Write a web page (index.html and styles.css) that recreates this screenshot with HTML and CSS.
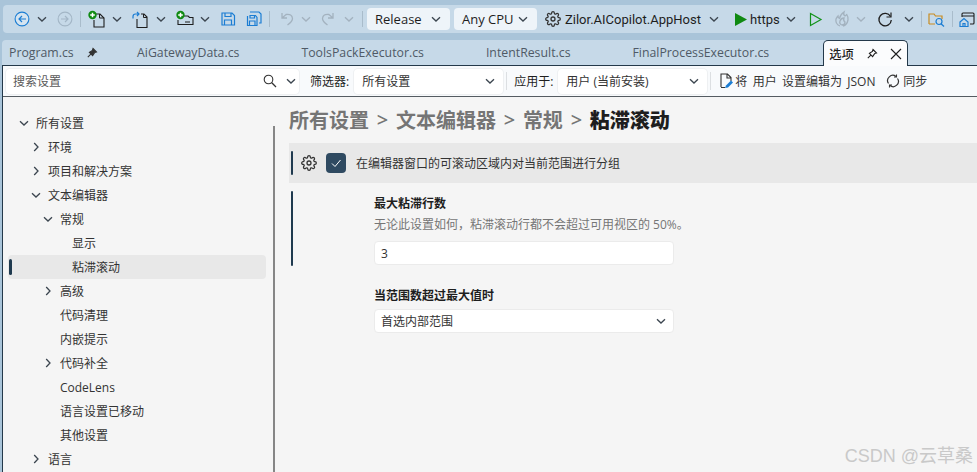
FILE: index.html
```html
<!DOCTYPE html>
<html lang="zh-CN">
<head>
<meta charset="utf-8">
<title>选项</title>
<link rel="stylesheet" href="styles.css">
</head>
<body>
<svg class="defs" aria-hidden="true">
  <defs>
    <symbol id="chev" viewBox="0 0 12 12"><path d="M2 4.2 6 8l4-3.8" fill="none" stroke="currentColor" stroke-width="1.3"/></symbol>
    <symbol id="gear" viewBox="0 0 24 24"><g fill="none" stroke="currentColor" stroke-width="1.9"><circle cx="12" cy="12" r="3"/><path d="M19.4 15a1.65 1.65 0 0 0 .33 1.82l.06.06a2 2 0 0 1 0 2.83 2 2 0 0 1-2.83 0l-.06-.06a1.65 1.65 0 0 0-1.82-.33 1.65 1.65 0 0 0-1 1.51V21a2 2 0 0 1-2 2 2 2 0 0 1-2-2v-.09A1.65 1.65 0 0 0 9 19.4a1.65 1.65 0 0 0-1.82.33l-.06.06a2 2 0 0 1-2.83 0 2 2 0 0 1 0-2.83l.06-.06a1.65 1.65 0 0 0 .33-1.82 1.65 1.65 0 0 0-1.51-1H3a2 2 0 0 1-2-2 2 2 0 0 1 2-2h.09A1.65 1.65 0 0 0 4.6 9a1.65 1.65 0 0 0-.33-1.82l-.06-.06a2 2 0 0 1 0-2.83 2 2 0 0 1 2.83 0l.06.06a1.65 1.65 0 0 0 1.82.33H9a1.65 1.65 0 0 0 1-1.51V3a2 2 0 0 1 2-2 2 2 0 0 1 2 2v.09a1.65 1.65 0 0 0 1 1.51 1.65 1.65 0 0 0 1.82-.33l.06-.06a2 2 0 0 1 2.83 0 2 2 0 0 1 0 2.83l-.06.06a1.65 1.65 0 0 0-.33 1.82V9a1.65 1.65 0 0 0 1.51 1H21a2 2 0 0 1 2 2 2 2 0 0 1-2 2h-.09a1.65 1.65 0 0 0-1.51 1z"/></g></symbol>
    <symbol id="pin" viewBox="0 0 12 12"><path d="M7 1.5 10.5 5 8.6 5.6 6.6 8.6 3.4 5.4 6.4 3.4ZM4.8 7.2 1.8 10.2" stroke="currentColor" stroke-width="1.1"/></symbol>
  </defs>
</svg>

<div class="app">
  <div class="toolbar">
    <svg class="ic16" viewBox="0 0 16 16"><circle cx="8" cy="8" r="6.9" fill="#d5e4f0" stroke="#1b7dd3" stroke-width="1.1"/><path d="M12 8H5M8 5 5 8l3 3" fill="none" stroke="#1b7dd3" stroke-width="1.2"/></svg>
    <svg class="chev m6"><use href="#chev"/></svg>
    <svg class="ic16 m9" viewBox="0 0 16 16"><circle cx="8" cy="8" r="6.9" fill="none" stroke="#a3b6c6" stroke-width="1.1"/><path d="M4 8h7M8 5l3 3-3 3" fill="none" stroke="#a3b6c6" stroke-width="1.2"/></svg>
    <span class="sep m7"></span>
    <svg class="ic18 m7" viewBox="0 0 18 18"><path d="M6.500 4H12l4 4v9H6V10" fill="none" stroke="#1e1e1e" stroke-width="1.1"/><path d="M11.500 4v4H16" fill="none" stroke="#1e1e1e" stroke-width="1"/><circle cx="4.500" cy="5" r="4.200" fill="#0f8a12"/><path d="M2.200 5h4.600M4.500 2.700v4.600" stroke="#fff" stroke-width="1.500"/></svg>
    <svg class="chev m5"><use href="#chev"/></svg>
    <svg class="ic16 m9" viewBox="0 0 16 16"><path d="M5 8v9M5 16.500h10V6l-3-3H9" fill="none" stroke="#1e1e1e" stroke-width="1.1"/><path d="M11.500 3v3.500H15" fill="none" stroke="#1e1e1e"/><path d="M1 7.500V5.500Q1 3 3.500 3H7M5 1l2 2-2 2" fill="none" stroke="#1b7dd3" stroke-width="1.2"/></svg>
    <svg class="chev m7"><use href="#chev"/></svg>
    <svg class="ic18 m9" viewBox="0 0 18 18"><path d="M6 6h6l1.500 1.500H17v7H2V10" fill="none" stroke="#1e1e1e" stroke-width="1.1"/><path d="M9 12h5" stroke="#1e1e1e"/><circle cx="4.500" cy="5" r="4.200" fill="#0f8a12"/><path d="M2.200 5h4.600M4.500 2.700v4.600" stroke="#fff" stroke-width="1.500"/></svg>
    <svg class="chev m5"><use href="#chev"/></svg>
    <svg class="ic16 m9" viewBox="0 0 16 16"><path d="M2 2h10l2.500 2.500V14H2ZM5 2v3.500h6V2M4.500 14V9h7v5" fill="none" stroke="#1b7dd3" stroke-width="1.2"/></svg>
    <svg class="ic16 m10" viewBox="0 0 16 16"><path d="M4 1h9l2 2v9h-2M1.500 5V14.500H11V6.500L9.500 4.500H4V4M4 4.500V7H8.500V4.500M3.500 14.500V10H9v4.500" fill="none" stroke="#1b7dd3" stroke-width="1.200"/></svg>
    <span class="sep m7"></span>
    <svg class="ic16 m8" viewBox="0 0 16 16"><path d="M4 2v5h5M4 7l4-3.500q6-1 6.500 4 0 3-5 6.500" fill="none" stroke="#a3b2bf" stroke-width="1.300"/></svg>
    <svg class="chev m6 dim"><use href="#chev"/></svg>
    <svg class="ic16 m9" viewBox="0 0 16 16"><path d="M12 2v5H7M12 7 8 3.500q-6-1-6.500 4 0 3 5 6.500" fill="none" stroke="#a3b2bf" stroke-width="1.300"/></svg>
    <svg class="chev m6 dim"><use href="#chev"/></svg>
    <span class="sep m7"></span>
    <div class="combo m4 combo-w"><span>Release</span><svg class="chev"><use href="#chev"/></svg></div>
    <div class="combo m4 combo-w"><span>Any CPU</span><svg class="chev"><use href="#chev"/></svg></div>
    <svg class="ic16 m8 dark"><use href="#gear"/></svg>
    <span class="tb-text m4 project">Zilor.AICopilot.AppHost</span>
    <svg class="chev m6"><use href="#chev"/></svg>
    <svg class="ic16 m12" viewBox="0 0 16 16"><path d="M3 2 15 8.500 3 15Z" fill="#0f8a12"/></svg>
    <span class="tb-text m2 profile">https</span>
    <svg class="chev m6"><use href="#chev"/></svg>
    <svg class="ic16 m10" viewBox="0 0 16 16"><path d="M3.500 2.500 14 8.500 3.500 14.500Z" fill="none" stroke="#12921a" stroke-width="1.200"/></svg>
    <svg class="ic16 m11" viewBox="0 0 16 16"><path d="M6 15Q1 13 2 8q1-2 2-3 0 2 1.500 2.500Q6 4 10 1q-1 3 1 4 2-1 1.500-2 2 3 1.500 6-1 5-5 6M6 10q1-3 4-3-1 3 1 4 0 3-3 3-3-1-2-4Z" fill="none" stroke="#a3b2bf" stroke-width="1.300"/></svg>
    <svg class="chev m5 dim"><use href="#chev"/></svg>
    <svg class="ic16 m10" viewBox="0 0 16 16"><path d="M13.500 5.500A6.200 6.200 0 1 0 14.300 9" fill="none" stroke="#1e1e1e" stroke-width="1.300"/><path d="M14 1.500v4.500H9.500" fill="none" stroke="#1e1e1e" stroke-width="1.200"/></svg>
    <svg class="chev m10"><use href="#chev"/></svg>
    <span class="sep m6"></span>
    <svg class="ic16 m6 wide" viewBox="0 0 17 16"><path d="M1 13V3h5l1.500 2H14v3M1 13h6" fill="none" stroke="#c98b1e" stroke-width="1.200"/><circle cx="11" cy="10.500" r="3" fill="none" stroke="#1b7dd3" stroke-width="1.200"/><path d="m13 12.800 3 2.700" stroke="#1b7dd3" stroke-width="1.300"/></svg>
    <span class="sep m7"></span>
    <svg class="ic16 m6 wide" viewBox="0 0 17 16"><path d="M3 6V3q0-1 1-1h10q1 0 1 1v9q0 1-1 1h-3M3 5h12" fill="none" stroke="#1e1e1e" stroke-width="1.100"/><path d="M1 11 5 7.500 9 11v4.500H1ZM4 15.500v-3h2v3" fill="none" stroke="#1b7dd3" stroke-width="1.200"/></svg>
  </div>

  <div class="doc">
    <div class="tabs">
      <div class="tab first"><span>Program.cs</span><svg class="tab-pin"><use href="#pin"/></svg></div>
      <div class="tab"><span>AiGatewayData.cs</span></div>
      <div class="tab"><span>ToolsPackExecutor.cs</span></div>
      <div class="tab"><span>IntentResult.cs</span></div>
      <div class="tab last"><span>FinalProcessExecutor.cs</span></div>
      <div class="tab active">
        <span class="tab-title">选项</span>
        <svg class="active-pin"><use href="#pin"/></svg>
        <svg class="tab-close" viewBox="0 0 12 12"><path d="M1 1l10 10M11 1 1 11" stroke="#1e1e1e" stroke-width="1.100"/></svg>
      </div>
    </div>

    <div class="page">
      <div class="filters">
        <div class="field search"><span class="placeholder">搜索设置</span>
          <svg class="ic14" viewBox="0 0 14 14"><circle cx="5.500" cy="5.500" r="4.300" fill="none" stroke="#333" stroke-width="1.100"/><path d="m8.800 8.800 4.200 4.200" stroke="#333" stroke-width="1.300"/></svg>
          <svg class="chev search-chev"><use href="#chev"/></svg>
        </div>
        <span class="flt-label l-filter">筛选器:</span>
        <div class="field drop d-filter"><span>所有设置</span><svg class="chev"><use href="#chev"/></svg></div>
        <span class="vsep"></span>
        <span class="flt-label">应用于:</span>
        <div class="field drop d-apply"><span>用户 (当前安装)</span><svg class="chev"><use href="#chev"/></svg></div>
        <span class="vsep"></span>
        <svg class="ic14 edit-ic" viewBox="0 0 15 16"><path d="M2 14V1h6.500L12 4.500V8M8 1v4h4M2 14.500h4" fill="none" stroke="#333" stroke-width="1.100"/><path d="m6 15 1-2.500 5-5 2 2-5 5Z" fill="#1b7dd3"/></svg>
        <span class="flt-action edit-text">将 用户 设置编辑为 JSON</span>
        <svg class="ic14 sync-ic" viewBox="0 0 14 14"><path d="M2.500 9.500A5.200 5.200 0 0 1 10 2.500M11.500 4.500A5.200 5.200 0 0 1 4 11.500" fill="none" stroke="#333" stroke-width="1.200"/><path d="M10.500 .5V3H8M3.500 13.500V11H6" fill="none" stroke="#333" stroke-width="1.100"/></svg>
        <span class="flt-action">同步</span>
      </div>

      <div class="body">
        <nav class="tree">
          <div class="node d0"><svg class="chev"><use href="#chev"/></svg>所有设置</div>
          <div class="node d1"><svg class="chev right"><use href="#chev"/></svg>环境</div>
          <div class="node d1"><svg class="chev right"><use href="#chev"/></svg>项目和解决方案</div>
          <div class="node d1"><svg class="chev"><use href="#chev"/></svg>文本编辑器</div>
          <div class="node d2"><svg class="chev"><use href="#chev"/></svg>常规</div>
          <div class="node d3 leaf">显示</div>
          <div class="node d3 leaf selected">粘滞滚动</div>
          <div class="node d2"><svg class="chev right"><use href="#chev"/></svg>高级</div>
          <div class="node d2 leaf">代码清理</div>
          <div class="node d2 leaf">内嵌提示</div>
          <div class="node d2"><svg class="chev right"><use href="#chev"/></svg>代码补全</div>
          <div class="node d2 leaf">CodeLens</div>
          <div class="node d2 leaf">语言设置已移动</div>
          <div class="node d2 leaf">其他设置</div>
          <div class="node d1"><svg class="chev right"><use href="#chev"/></svg>语言</div>
        </nav>
        <div class="splitter"></div>
        <main class="content">
          <h1 class="crumbs"><span>所有设置</span><i>&gt;</i><span>文本编辑器</span><i>&gt;</i><span>常规</span><i>&gt;</i><b>粘滞滚动</b></h1>
          <div class="setting-row">
            <span class="marker row-marker"></span>
            <svg class="row-gear"><use href="#gear"/></svg>
            <span class="check"><svg viewBox="0 0 12 12"><path d="m2 6.500 3 3 5.500-6.500" fill="none" stroke="#fff" stroke-width="1"/></svg></span>
            <span class="row-text">在编辑器窗口的可滚动区域内对当前范围进行分组</span>
          </div>
          <div class="group">
            <span class="marker group-marker"></span>
            <div class="sub">
              <div class="sub-label">最大粘滞行数</div>
              <div class="sub-desc">无论此设置如何，粘滞滚动行都不会超过可用视区的 50%。</div>
              <div class="input">3</div>
              <div class="sub-label second">当范围数超过最大值时</div>
              <div class="input select"><span>首选内部范围</span><svg class="chev"><use href="#chev"/></svg></div>
            </div>
          </div>
        </main>
      </div>
    </div>
  </div>
  <div class="watermark">CSDN @云草桑</div>
</div>
</body>
</html>
```

FILE: styles.css
```css
* { box-sizing: border-box; }
html, body { margin: 0; padding: 0; height: 100%; overflow: hidden; }
body {
  font-family: "Open Sans", "Noto Sans CJK SC", sans-serif;
  font-size: 12px;
  color: #1e1e1e;
  background: #a9c4d9;
}
.defs { position: absolute; width: 0; height: 0; }

.app { position: relative; width: 977px; height: 472px; padding-top: 5px; display: flex; flex-direction: column; overflow: hidden; }

/* icons */
.chev { width: 12px; height: 12px; flex: none; color: #3c4650; }
.chev.dim { color: #a3b2bf; }
.chev.right { transform: rotate(-90deg); }
.ic16 { width: 16px; height: 16px; flex: none; overflow: visible; }
.ic16.wide { width: 17px; }
.ic16.dark { color: #333; }
.ic18 { width: 18px; height: 18px; flex: none; overflow: visible; }
.ic14 { width: 14px; height: 14px; flex: none; }

/* spacing steps */
.m2 { margin-left: 2px; } .m4 { margin-left: 4px; } .m5 { margin-left: 5px; }
.m6 { margin-left: 6px; } .m7 { margin-left: 7px; } .m8 { margin-left: 8px; }
.m9 { margin-left: 9px; } .m10 { margin-left: 10px; } .m11 { margin-left: 11px; }
.m12 { margin-left: 12px; }

/* main toolbar */
.toolbar {
  height: 28px; margin-left: 3px; padding-left: 11px; flex: none;
  display: flex; align-items: center;
  background: #c6d9e8; border-radius: 4px 0 0 4px;
}
.sep { width: 1px; height: 16px; background: #a9bccb; flex: none; }
.combo {
  height: 22px; padding: 0 8px; display: flex; align-items: center; justify-content: space-between;
  background: #eef4f9; border-radius: 4px; font-size: 13px; flex: none;
}
.combo-w { width: 83px; }
.tb-text { flex: none; white-space: nowrap; font-family: "Roboto", "Noto Sans CJK SC", sans-serif; }
.project { width: 137px; font-size: 13px; }
.profile { width: 29px; font-size: 13px; }

/* document well */
.doc { margin: 7px 0 0 2px; flex: 1; display: flex; flex-direction: column; min-height: 0; }
.tabs {
  height: 25px; flex: none; display: flex; align-items: center; padding-left: 1px;
  background: #c6d9e8; border-radius: 4px 0 0 0;
  color: #4f5a66; font-size: 12.3px;
}
.tab { display: flex; align-items: center; height: 100%; padding: 0 6px; margin-right: 50px; white-space: nowrap; }
.tab.first { margin-right: 0; width: 128px; }
.tab.last { margin-right: 48px; }
.tab-pin { width: 12px; height: 12px; margin-left: 12px; color: #333; fill: #333; }
.tab.active {
  margin: 0; width: 85px; height: 26px; align-self: flex-start; position: relative; z-index: 1;
  padding: 0 5px; color: #1e1e1e; background: #fbfcfd;
  border: 1px solid #24394a; border-bottom: 0; border-radius: 5px 5px 0 0;
}
.tab-title { font-weight: 500; }
.active-pin { width: 12px; height: 12px; margin-left: 12px; color: #1e1e1e; fill: none; }
.tab-close { width: 12px; height: 12px; margin-left: 12px; }

.page { flex: 1; min-height: 0; display: flex; flex-direction: column; border-top: 1px solid #24394a; border-left: 1px solid #24394a; background: #f5f5f5; }
.filters {
  height: 31px; flex: none; display: flex; align-items: center; padding-left: 3px;
  background: #f8fafc; border-bottom: 1px solid #555c62;
}
.field {
  height: 25px; display: flex; align-items: center; justify-content: space-between; flex: none;
  background: #fff; border-radius: 4px; box-shadow: 0 0 0 1px #eef0f2;
}
.search { width: 293px; padding: 0 2px 0 7px; color: #5a5a5a; font-size: 12px; }
.placeholder { flex: 1; }
.search-chev { margin-left: 8px; }
.flt-label { margin-right: 5px; margin-left: 0; flex: none; }
.l-filter { margin-left: 11px; }
.drop { width: 149px; padding: 0 7px 0 8px; color: #333; }
.vsep { width: 1px; height: 18px; margin: 0 7px 0 3px; background: #dcdfe2; flex: none; }
.flt-action { flex: none; white-space: nowrap; color: #333; }
.edit-ic { margin: 0 1px 0 1px; width: 15px; height: 16px; }
.edit-text { word-spacing: 2.2px; width: 140px; }
.sync-ic { margin: 0 3px 0 11px; }

.body { flex: 1; min-height: 0; display: flex; }
.tree { width: 270px; flex: none; padding: 14px 0 0 5px; }
.node { height: 24px; display: flex; align-items: center; white-space: nowrap; color: #333; padding-right: 4px; }
.node .chev { width: 12px; height: 12px; margin-right: 6px; }
.d0 { padding-left: 10px; }
.d1 { padding-left: 22px; }
.d2 { padding-left: 34px; }
.d3 { padding-left: 46px; }
.leaf.d2 { padding-left: 52px; }
.leaf.d3 { padding-left: 64px; }
.selected { position: relative; background: #e8e8e8; border-radius: 4px; width: 258px; margin-left: 0; }
.selected::before {
  content: ""; position: absolute; left: 1px; top: 4px; width: 3px; height: 16px;
  background: #1f3a4f; border-radius: 2px;
}
.splitter { width: 2px; margin-top: 29px; flex: none; background: #868686; }
.content { flex: 1; min-width: 0; padding: 9px 0 0 14px; }
.crumbs {
  margin: 0; height: 27px; display: flex; align-items: center; gap: 7.75px;
  font-size: 20px; font-weight: 700; color: #757575; white-space: nowrap;
}
.crumbs i { font-style: normal; font-weight: 600; }
.crumbs b { color: #1e1e1e; }
.setting-row { height: 40px; margin-top: 10px; display: flex; align-items: center; background: #e8e8e8; padding-left: 2px; }
.marker { width: 2px; background: #1f3a4f; border-radius: 1px; flex: none; display: block; }
.row-marker { height: 24px; }
.row-gear { width: 16px; height: 16px; margin-left: 8px; color: #333; flex: none; }
.check { width: 20px; height: 20px; margin-left: 9px; border-radius: 4px; background: #2f4a61; display: flex; align-items: center; justify-content: center; flex: none; }
.check svg { width: 12px; height: 12px; }
.row-text { margin-left: 10px; color: #333; white-space: nowrap; }
.group { display: flex; padding: 8px 0 0 2px; }
.group-marker { height: 75px; }
.sub { margin-left: 81px; width: 300px; }
.sub-label { font-weight: 700; height: 16px; line-height: 16px; margin-top: 5px; color: #1e1e1e; white-space: nowrap; }
.sub-label.second { margin-top: 23px; }
.sub-desc { margin-top: 5px; height: 16px; line-height: 16px; color: #767676; white-space: nowrap; }
.input {
  margin-top: 8px; height: 24px; width: 300px; padding: 0 6px; display: flex; align-items: center; justify-content: space-between;
  background: #fff; border-radius: 4px; border: 1px solid #ebebeb; color: #333;
}
.select { margin-top: 5px; }

.watermark {
  position: absolute; right: 4px; bottom: 5px;
  font-family: "Liberation Sans", "Noto Sans CJK SC", sans-serif; font-size: 18px; color: #c9c9c9; white-space: nowrap;
}
```
